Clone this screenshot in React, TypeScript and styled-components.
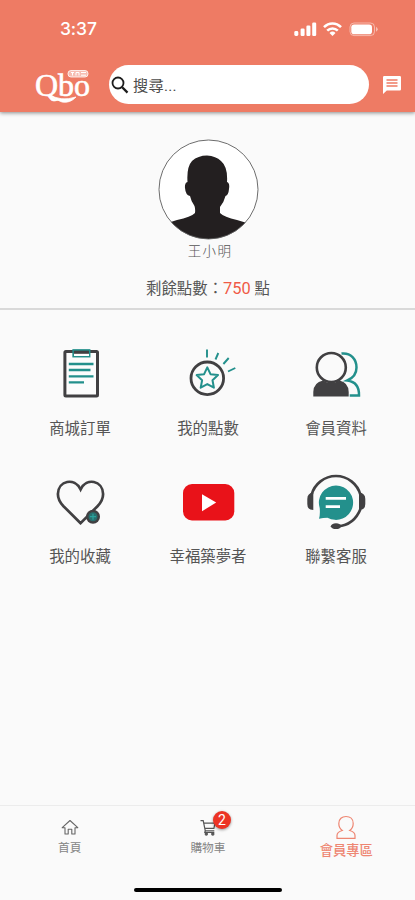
import React from 'react';
import styled, { createGlobalStyle } from 'styled-components';

const coral = '#ee7b64';
const teal = '#23908c';
const ink = '#414042';

const GlobalStyle = createGlobalStyle`
  * { box-sizing: border-box; }
  body { margin: 0; background: #fafafa; }
`;

const Screen = styled.div`
  display: flex;
  flex-direction: column;
  width: 415px;
  height: 900px;
  overflow: hidden;
  background: #fafafa;
  color: #555;
  font-family: Roboto, 'Noto Sans CJK TC', sans-serif;
`;

const Header = styled.header`
  flex: none;
  height: 112px;
  background: ${coral};
  box-shadow: 0 1px 4px rgba(0, 0, 0, 0.45);
`;

const StatusBar = styled.div`
  display: flex;
  align-items: center;
  justify-content: space-between;
  height: 57px;
  padding: 0 36px 0 60px;
`;

const Clock = styled.span`
  color: #fff;
  font: 500 17.5px/20px Inter, sans-serif;
  letter-spacing: -0.1px;
`;

const Toolbar = styled.div`
  display: flex;
  align-items: center;
  height: 55px;
  padding: 0 13px 0 35px;
`;

const Logo = styled.div`
  position: relative;
  width: 74px;
  height: 38px;
  color: #fff;
`;

const LogoWord = styled.span`
  display: block;
  padding-top: 2px;
  font: 32px/34px 'Liberation Serif', serif;
  letter-spacing: -0.1px;
  -webkit-text-stroke: 0.6px #fff;
`;

const LogoMark = styled.svg`
  position: absolute;
  left: 0;
  top: 0;
`;

const Search = styled.div`
  display: flex;
  align-items: center;
  gap: 4px;
  width: 260px;
  height: 39px;
  padding-left: 2px;
  border-radius: 20px;
  background: #fff;
  font-size: 15.2px;
  color: #4c4c4c;
`;

const SearchHint = styled.span`
  padding-bottom: 2px;
  letter-spacing: 0.3px;
`;

const ChatButton = styled.div`
  display: flex;
  margin-left: auto;
`;

const Profile = styled.section`
  display: flex;
  flex: none;
  flex-direction: column;
  align-items: center;
  height: 198px;
  padding: 27px 0 0 1px;
  border-bottom: 2px solid #d9d9d9;
`;

const UserName = styled.div`
  height: 22px;
  padding-left: 4px;
  font-size: 13.5px;
  line-height: 22px;
  font-weight: 300;
  letter-spacing: 1.3px;
`;

const Points = styled.div`
  margin-top: 16px;
  font-size: 15.4px;
  line-height: 22px;
  white-space: pre;
`;

const PointValue = styled.span`
  color: #f05a46;
  font-size: 16.4px;
`;

const Menu = styled.main`
  display: grid;
  flex: 1;
  grid-template-columns: repeat(3, 128px);
  grid-auto-rows: 128px;
  padding: 32px 0 0 16px;
`;

const MenuItem = styled.div`
  display: flex;
  flex-direction: column;
  align-items: center;
`;

const MenuLabel = styled.span`
  margin-top: 12px;
  font-size: 15.4px;
  line-height: 22px;
`;

const TabBar = styled.nav`
  display: grid;
  flex: none;
  grid-template-columns: repeat(3, 138.3px);
  height: 83px;
  border-top: 1px solid #ececec;
`;

const Tab = styled.div<{ $active?: boolean }>`
  display: flex;
  flex-direction: column;
  align-items: center;
  padding: ${p => (p.$active ? 9 : 13)}px 0 0 1px;
  color: ${p => (p.$active ? '#ee8672' : '#858585')};
  font-size: ${p => (p.$active ? 13.3 : 11.7)}px;
  font-weight: ${p => (p.$active ? 500 : 400)};
  line-height: 18px;
`;

const TabIcon = styled.div<{ $active?: boolean }>`
  position: relative;
  display: flex;
  height: ${p => (p.$active ? 27 : 20)}px;
`;

const TabLabel = styled.span`
  white-space: nowrap;
`;

const Badge = styled.span`
  position: absolute;
  left: 14px;
  top: -8px;
  width: 18px;
  height: 18px;
  border-radius: 50%;
  background: #ec3324;
  box-shadow: 0 1px 3px rgba(0, 0, 0, 0.4);
  color: #fff;
  font-size: 14px;
  font-weight: 400;
  line-height: 18px;
  text-align: center;
`;

const HomeIndicator = styled.div`
  flex: none;
  width: 148px;
  height: 4px;
  margin: 0 auto 8px 134px;
  border-radius: 2px;
  background: #000;
`;

const StatusIcons = () => (
  <svg width="86" height="18" viewBox="0 0 86 18" fill="#fff">
    <rect x="1.3" y="11" width="4" height="5" rx="1.4" />
    <rect x="7.6" y="8.5" width="4" height="7.5" rx="1.2" />
    <rect x="13.4" y="5.5" width="4" height="10.5" rx="1.2" />
    <rect x="19.2" y="2.5" width="4" height="13.5" rx="1.2" />
    <g fill="none" stroke="#fff" strokeWidth="2.5">
      <path d="M31 7.2C35.8 2.1 43.2 2.1 48 7.2" />
      <path d="M34.2 10.7C37.2 7.6 41.8 7.6 44.8 10.7" />
    </g>
    <path d="M36.5 13Q39.500 10.200 42.500 13L39.500 16Z" />
    <rect x="57" y="3" width="24.500" height="12.600" rx="4" fill="none" stroke="#fff" strokeOpacity=".45" />
    <rect x="58.300" y="4.400" width="20.700" height="9.800" rx="2.800" />
    <path d="M83 6.800Q86.500 9.300 83 11.800Z" opacity=".5" />
  </svg>
);

const SearchIcon = () => (
  <svg width="18" height="18" viewBox="0 0 18 18" fill="none" stroke="#1c1c1c">
    <circle cx="7" cy="7" r="5.5" strokeWidth="1.8" />
    <path d="M11.2 11.2L16.5 16.6" strokeWidth="2.3" />
  </svg>
);

const ChatIcon = () => (
  <svg width="20" height="20" viewBox="0 0 20 20">
    <path d="M1 2.2Q1 1 2.2 1H17.8Q19 1 19 2.200V14.300Q19 15.500 17.800 15.500H4.800L1 19Z" fill="#fff" />
    <path d="M4.500 5.100H15.500M4.500 8.100H15.500M4.500 11.100H15.500" stroke={coral} strokeWidth="1.500" />
  </svg>
);

const Avatar = () => (
  <svg width="101" height="101" viewBox="0 0 101 101">
    <defs>
      <clipPath id="portrait"><circle cx="50.5" cy="50.5" r="49.5" /></clipPath>
    </defs>
    <circle cx="50.5" cy="50.5" r="49.5" fill="#fff" />
    <path
      clipPath="url(#portrait)"
      fill="#231f20"
      d="M0 88Q10 83.500 19 81Q33 78 37 74Q37.500 70 36.500 67Q33 62 32 57Q27.500 56 27 49Q26.500 44 29.500 43Q28.500 28 34 22Q40 16.500 49 16.500Q58 17 63 22Q70 28 69 43Q72 44 71 50Q70.500 56 67.500 57Q66 63 62 68V74Q66 78 79 81Q89 83.500 101 89V101H0Z"
    />
    <circle cx="50.500" cy="50.500" r="49.500" fill="none" stroke="#5c5c5c" strokeWidth=".9" />
  </svg>
);

const MenuIcon = ({ children }: { children: React.ReactNode }) => (
  <svg width="64" height="64" viewBox="0 0 64 64" fill="none" stroke={ink} strokeWidth="3">
    {children}
  </svg>
);

const OrdersIcon = () => (
  <MenuIcon>
    <rect x="16.900" y="9.400" width="32.600" height="44.700" rx="1" fill="#fcfcfc" />
    <rect x="25.100" y="7.900" width="16.600" height="6.800" fill={ink} stroke={teal} strokeWidth="1.500" />
    <path d="M26 12.900H41" stroke="#fff" strokeWidth="2.200" />
    <path d="M20.800 22H45.500M20.800 28H42.500M20.800 34.300H45.500M20.800 40.300H36" stroke={teal} strokeWidth="2.300" />
  </MenuIcon>
);

const RewardsIcon = () => (
  <MenuIcon>
    <circle cx="31.300" cy="36.300" r="16.300" strokeWidth="2.800" />
    <path
      stroke={teal}
      strokeWidth="2"
      strokeLinejoin="round"
      d="M31.300 25.300L34.500 32.200L42 33.100L36.500 38.300L37.900 45.700L31.300 42.100L24.700 45.700L26.100 38.300L20.600 33.100L28.100 32.200Z"
    />
    <path d="M31 7.500V15.500M42.300 11L39.500 17.500M52.700 16L47.400 22M59.300 26L52 29.500" stroke={teal} strokeWidth="1.900" />
  </MenuIcon>
);

const MemberIcon = () => (
  <MenuIcon>
    <path
      stroke={teal}
      strokeWidth="2.500"
      d="M37.500 11.600C47 10.500 52.500 17.500 52.500 25.500C52.500 31.500 49 36 43.300 38.500C51 39.500 55.300 43.500 55 53.500H45.700"
    />
    <circle cx="27.300" cy="25.500" r="14.500" strokeWidth="2.600" fill="#fafafa" />
    <path d="M9.300 54.500V50Q9.500 40.500 19 38.500Q27 43.500 35.500 38.500Q44.500 40.500 44.700 50V54.500Z" fill={ink} stroke="none" />
  </MenuIcon>
);

const FavoritesIcon = () => (
  <MenuIcon>
    <path
      strokeWidth="2.700"
      d="M32.600 53.200L15.500 36.200C10.500 31 9.900 27.500 9.900 24C10.300 10.500 26.500 7 32.600 19.500C38.500 7 54.700 10.500 55.100 24C55.100 27.500 54.500 31 49.500 36.200Z"
    />
    <circle cx="45" cy="46.700" r="7" fill={ink} stroke="none" />
    <circle cx="45" cy="46.700" r="4.500" fill="#28706f" stroke="none" />
    <path d="M45 43.700V49.700M42 46.700H48" stroke="#2ba29c" strokeWidth="1.200" />
  </MenuIcon>
);

const VideoIcon = () => (
  <MenuIcon>
    <rect x="7" y="14" width="51.300" height="36.500" rx="9" fill="#e91219" stroke="none" />
    <path d="M26 24.300L40.200 32.600L26 41.200Z" fill="#fff" stroke="none" />
  </MenuIcon>
);

const SupportIcon = () => (
  <MenuIcon>
    <path
      d="M32 15.500A17.200 17.200 0 1 1 23.500 47.700Q19 47.700 15 48.800Q16.300 44.500 15.700 38A17.200 17.200 0 0 1 32 15.500Z"
      fill={teal}
      stroke="none"
    />
    <path d="M21.700 28.300H42M21.700 36.700H36" stroke="#fff" strokeWidth="2.700" />
    <path d="M7.500 25A25.300 25.300 0 0 1 56.500 25M56.500 39C52 50 45 55.500 34 56.200" strokeWidth="2.700" />
    <path d="M9.300 22.500Q3.300 23 3.300 29V34Q3.300 40 9.300 40ZM55 22.500Q61.300 23 61.300 29V34Q61.300 40 55 40Z" fill={ink} stroke="none" />
    <ellipse cx="32" cy="56.200" rx="5.200" ry="2.900" fill={ink} stroke="none" />
  </MenuIcon>
);

const HomeIcon = () => (
  <svg width="18" height="17" viewBox="0 0 18 17" fill="none" stroke="#666" strokeWidth="1.100" strokeLinejoin="round">
    <path d="M1.200 8.700L9 1.500L16.800 8.700H14V15H10.800V10.300H7.200V15H4V8.700Z" />
  </svg>
);

const CartIcon = () => (
  <svg width="18" height="18" viewBox="0 0 18 18" fill="none" stroke="#555" strokeWidth="1.200">
    <path d="M1.500 1.700H4.200L6.300 11.800H15.300M4.700 4.200H16L14.900 9.400H5.800" />
    <path d="M6.300 11.800L5.800 13.500H15.300" />
    <circle cx="7.300" cy="15" r="1.100" fill="#555" />
    <circle cx="13.800" cy="15" r="1.100" fill="#555" />
  </svg>
);

const PersonIcon = () => (
  <svg width="20" height="25" viewBox="0 0 20 25" fill="none" stroke="#ee8672" strokeWidth="1.200">
    <path d="M6.300 15.500C4.300 14 2.800 11.500 2.800 8.500C2.800 4 6 1.500 10 1.500S17.200 4 17.200 8.500C17.200 11.500 15.700 14 13.700 15.500Q19 17 19 20.500V23.400H1V20.500Q1 17 6.300 15.500Z" />
  </svg>
);

const menuItems = [
  { label: '商城訂單', Icon: OrdersIcon },
  { label: '我的點數', Icon: RewardsIcon },
  { label: '會員資料', Icon: MemberIcon },
  { label: '我的收藏', Icon: FavoritesIcon },
  { label: '幸福築夢者', Icon: VideoIcon },
  { label: '聯繫客服', Icon: SupportIcon },
];

export default function App() {
  return (
    <Screen>
      <GlobalStyle />
      <Header>
        <StatusBar>
          <Clock>3:37</Clock>
          <StatusIcons />
        </StatusBar>
        <Toolbar>
          <Logo>
            <LogoWord>Qbo</LogoWord>
            <LogoMark width="58" height="38" viewBox="0 0 58 38" fill="none" stroke="#fff">
              <path d="M14 28Q25 36 41 31Q35 37.500 27 36Q20 34 14 28Z" fill="#fff" strokeWidth=".8" />
              <rect x="33" y="4.500" width="20" height="6.500" rx="3" fill="#fff" fillOpacity=".5" strokeWidth=".8" />
              <path d="M36 6.500H39M37.500 6.500V9.500M41 9.500V6.500H44V9.500M46 6.500H51M46 9.200H51" strokeWidth="1" />
            </LogoMark>
          </Logo>
          <Search>
            <SearchIcon />
            <SearchHint>搜尋...</SearchHint>
          </Search>
          <ChatButton><ChatIcon /></ChatButton>
        </Toolbar>
      </Header>
      <Profile>
        <Avatar />
        <UserName>王小明</UserName>
        <Points>剩餘點數：<PointValue>750</PointValue> 點</Points>
      </Profile>
      <Menu>
        {menuItems.map(({ label, Icon }) => (
          <MenuItem key={label}>
            <Icon />
            <MenuLabel>{label}</MenuLabel>
          </MenuItem>
        ))}
      </Menu>
      <TabBar>
        <Tab>
          <TabIcon><HomeIcon /></TabIcon>
          <TabLabel>首頁</TabLabel>
        </Tab>
        <Tab>
          <TabIcon><CartIcon /><Badge>2</Badge></TabIcon>
          <TabLabel>購物車</TabLabel>
        </Tab>
        <Tab $active>
          <TabIcon $active><PersonIcon /></TabIcon>
          <TabLabel>會員專區</TabLabel>
        </Tab>
      </TabBar>
      <HomeIndicator />
    </Screen>
  );
}
